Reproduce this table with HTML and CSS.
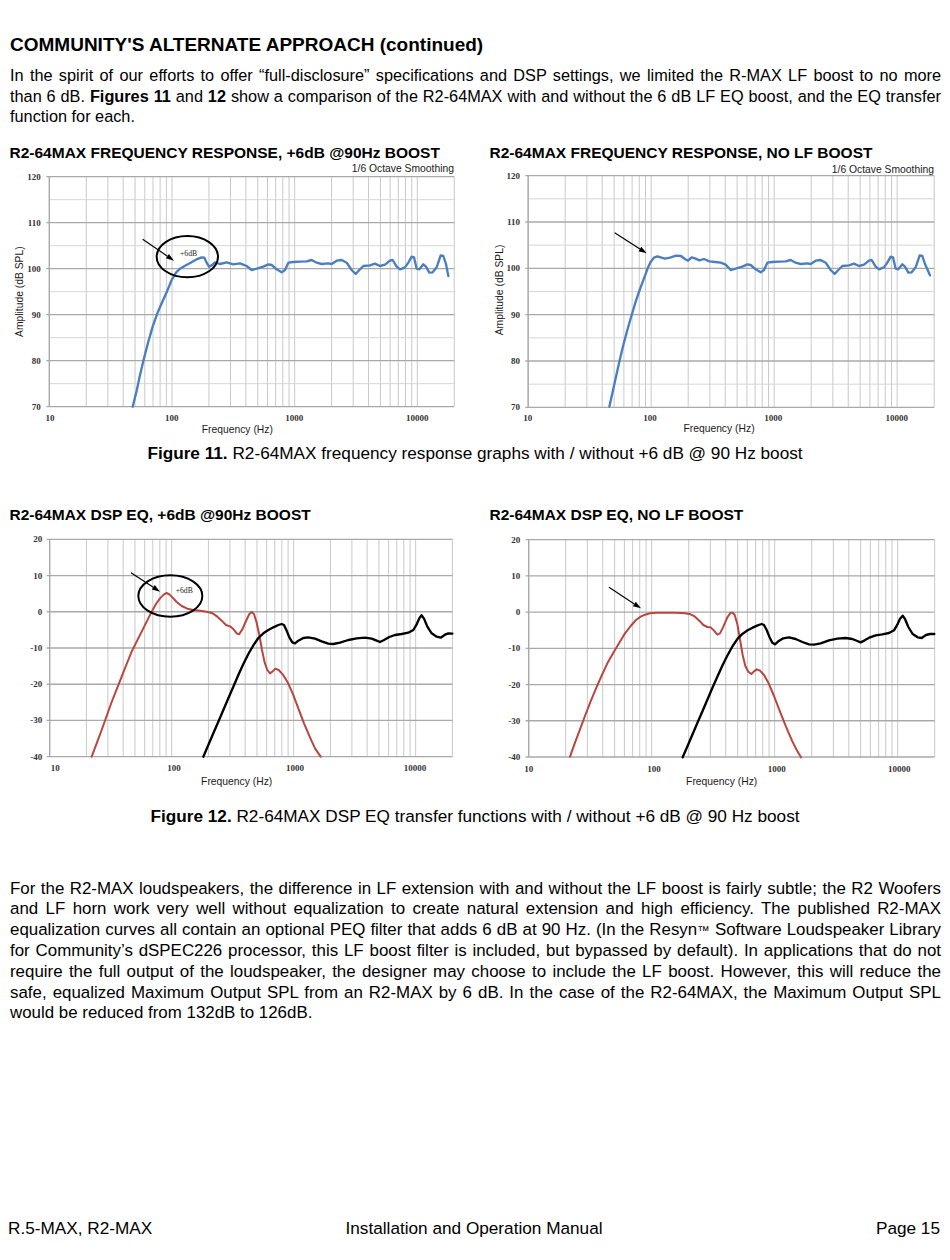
FILE: index.html
```html
<!DOCTYPE html>
<html lang="en">
<head>
<meta charset="utf-8">
<title>Installation and Operation Manual - Page 15</title>
<link rel="stylesheet" href="styles.css">
</head>
<body>
<div class="page">
  <h1 class="heading">COMMUNITY'S ALTERNATE APPROACH (continued)</h1>
  <p class="para intro">
    <span class="ln">In the spirit of our efforts to offer “full-disclosure” specifications and DSP settings, we limited the R-MAX LF boost to no more</span>
    <span class="ln">than 6 dB. <b>Figures 11</b> and <b>12</b> show a comparison of the R2-64MAX with and without the 6 dB LF EQ boost, and the EQ transfer</span>
    <span class="ln ln-last">function for each.</span>
  </p>

  <section class="fig-row fig-row-top">
    <div class="fig">
      <h2 class="fig-title">R2-64MAX FREQUENCY RESPONSE, +6dB @90Hz BOOST</h2>
      <svg class="chart chart-top" viewBox="0 66 1410 834">
        <defs>
          <g id="dec">
            <line x1="0" y1="0" x2="0" y2="1"/>
            <line x1="110.8" y1="0" x2="110.8" y2="1"/>
            <line x1="175.6" y1="0" x2="175.6" y2="1"/>
            <line x1="221.6" y1="0" x2="221.6" y2="1"/>
            <line x1="257.2" y1="0" x2="257.2" y2="1"/>
            <line x1="286.4" y1="0" x2="286.4" y2="1"/>
            <line x1="311" y1="0" x2="311" y2="1"/>
            <line x1="332.3" y1="0" x2="332.3" y2="1"/>
            <line x1="351.2" y1="0" x2="351.2" y2="1"/>
          </g>
        </defs>
        <g class="vgrid">
          <use href="#dec" transform="translate(148 110) scale(1 690)"/>
          <use href="#dec" transform="translate(516 110) scale(1 690)"/>
          <use href="#dec" transform="translate(884 110) scale(1 690)"/>
          <line x1="1252" y1="110" x2="1252" y2="800"/>
          <line x1="1362.8" y1="110" x2="1362.8" y2="800"/>
        </g>
        <g class="hminor">
          <line x1="148" y1="179" x2="1362.8" y2="179"/>
          <line x1="148" y1="317" x2="1362.8" y2="317"/>
          <line x1="148" y1="455" x2="1362.8" y2="455"/>
          <line x1="148" y1="593" x2="1362.8" y2="593"/>
          <line x1="148" y1="731" x2="1362.8" y2="731"/>
        </g>
        <g class="hmajor">
          <line x1="139" y1="110" x2="1362.8" y2="110"/>
          <line x1="139" y1="248" x2="1362.8" y2="248"/>
          <line x1="139" y1="386" x2="1362.8" y2="386"/>
          <line x1="139" y1="524" x2="1362.8" y2="524"/>
          <line x1="139" y1="662" x2="1362.8" y2="662"/>
          <line x1="139" y1="800" x2="1362.8" y2="800"/>
          <line x1="148" y1="110" x2="148" y2="800"/>
        </g>
        <polyline class="curve blue" points="398,800 410,752 420,705 432,655 445,605 458,560 472,520 487,485 502,452 515,420 528,398 540,386 555,377 572,368 590,358 605,352 613,353 620,368 627,380 635,376 645,367 660,372 680,367 700,373 720,370 740,378 755,390 770,386 790,380 805,373 815,375 830,388 845,397 855,390 865,368 880,366 900,365 920,364 935,360 950,368 965,372 985,370 995,372 1010,362 1025,360 1040,368 1055,390 1067,402 1078,390 1090,378 1110,376 1125,371 1140,378 1155,374 1170,362 1178,360 1190,380 1200,388 1215,382 1225,368 1235,350 1242,352 1250,386 1258,388 1270,373 1278,380 1288,398 1298,397 1310,382 1322,346 1330,348 1338,372 1345,408"/>
        <ellipse class="ring" cx="562" cy="350" rx="92" ry="62"/>
        <line class="arrow" x1="428" y1="298" x2="502.2" y2="348.5"/>
        <polygon class="arrowhead" points="522,362 497.7,355.1 506.7,341.9"/>
        <text class="note" x="540" y="348">+6dB</text>
        <text class="ax" x="1362" y="96" text-anchor="end">1/6 Octave Smoothing</text>
        <g class="tick" text-anchor="end">
          <text x="122" y="119">120</text>
          <text x="122" y="257">110</text>
          <text x="122" y="395">100</text>
          <text x="122" y="533">90</text>
          <text x="122" y="671">80</text>
          <text x="122" y="809">70</text>
        </g>
        <g class="tick" text-anchor="middle">
          <text x="150" y="844">10</text>
          <text x="515" y="844">100</text>
          <text x="883" y="844">1000</text>
          <text x="1252" y="844">10000</text>
        </g>
        <text class="ax" x="712" y="879" text-anchor="middle">Frequency (Hz)</text>
        <text class="ax" transform="translate(69 455) rotate(-90)" text-anchor="middle">Amplitude (dB SPL)</text>
      </svg>
    </div>
    <div class="fig">
      <h2 class="fig-title">R2-64MAX FREQUENCY RESPONSE, NO LF BOOST</h2>
      <svg class="chart chart-top" viewBox="0 66 1410 834">
        <g class="vgrid">
          <use href="#dec" transform="translate(144.5 107) scale(1.0027 695)"/>
          <use href="#dec" transform="translate(513.5 107) scale(1.0027 695)"/>
          <use href="#dec" transform="translate(882.5 107) scale(1.0027 695)"/>
          <line x1="1251.5" y1="107" x2="1251.5" y2="802"/>
          <line x1="1362.6" y1="107" x2="1362.6" y2="802"/>
        </g>
        <g class="hminor">
          <line x1="144.5" y1="176.5" x2="1362.6" y2="176.5"/>
          <line x1="144.5" y1="315.5" x2="1362.6" y2="315.5"/>
          <line x1="144.5" y1="454.5" x2="1362.6" y2="454.5"/>
          <line x1="144.5" y1="593.5" x2="1362.6" y2="593.5"/>
          <line x1="144.5" y1="732.5" x2="1362.6" y2="732.5"/>
        </g>
        <g class="hmajor">
          <line x1="136" y1="107" x2="1362.6" y2="107"/>
          <line x1="136" y1="246" x2="1362.6" y2="246"/>
          <line x1="136" y1="385" x2="1362.6" y2="385"/>
          <line x1="136" y1="524" x2="1362.6" y2="524"/>
          <line x1="136" y1="663" x2="1362.6" y2="663"/>
          <line x1="136" y1="802" x2="1362.6" y2="802"/>
          <line x1="144.5" y1="107" x2="144.5" y2="802"/>
        </g>
        <polyline class="curve blue" points="388,800 398,755 408,710 418,665 430,615 442,570 455,525 468,482 480,447 492,415 503,385 512,365 522,353 532,349 542,352 555,356 570,353 588,347 603,348 615,357 624,362 635,352 645,355 658,361 672,357 688,364 705,366 722,368 737,374 752,390 767,386 787,380 802,373 812,375 827,388 842,397 852,390 862,368 877,366 897,365 917,364 932,360 947,368 962,372 982,370 992,372 1007,362 1022,360 1037,368 1052,390 1064,402 1075,390 1087,378 1107,376 1122,371 1137,378 1152,374 1167,362 1175,360 1187,380 1197,388 1212,382 1222,368 1232,350 1239,352 1247,386 1255,388 1267,373 1275,380 1285,398 1295,397 1307,382 1319,346 1327,348 1335,372 1350,406"/>
        <line class="arrow" x1="404" y1="278" x2="479.8" y2="327"/>
        <polygon class="arrowhead" points="500,340 475.5,333.7 484.1,320.3"/>
        <text class="ax" x="1362" y="98" text-anchor="end">1/6 Octave Smoothing</text>
        <g class="tick" text-anchor="end">
          <text x="120" y="116">120</text>
          <text x="120" y="255">110</text>
          <text x="120" y="394">100</text>
          <text x="120" y="533">90</text>
          <text x="120" y="672">80</text>
          <text x="120" y="811">70</text>
        </g>
        <g class="tick" text-anchor="middle">
          <text x="143" y="844">10</text>
          <text x="510" y="844">100</text>
          <text x="880" y="844">1000</text>
          <text x="1250" y="844">10000</text>
        </g>
        <text class="ax" x="717" y="877" text-anchor="middle">Frequency (Hz)</text>
        <text class="ax" transform="translate(69 450) rotate(-90)" text-anchor="middle">Amplitude (dB SPL)</text>
      </svg>
    </div>
  </section>
  <p class="caption"><b>Figure 11.</b> R2-64MAX frequency response graphs with / without +6 dB @ 90 Hz boost</p>

  <section class="fig-row fig-row-bottom">
    <div class="fig">
      <h2 class="fig-title">R2-64MAX DSP EQ, +6dB @90Hz BOOST</h2>
      <svg class="chart chart-bottom" viewBox="0 72 1410 810">
        <g class="vgrid">
          <use href="#dec" transform="translate(149 118) scale(0.9946 652)"/>
          <use href="#dec" transform="translate(515 118) scale(0.9946 652)"/>
          <use href="#dec" transform="translate(881 118) scale(0.9946 652)"/>
          <line x1="1247" y1="118" x2="1247" y2="770"/>
          <line x1="1357.2" y1="118" x2="1357.2" y2="770"/>
        </g>
        <g class="hmajor">
          <line x1="140" y1="118" x2="1357.2" y2="118"/>
          <line x1="140" y1="226.7" x2="1357.2" y2="226.7"/>
          <line x1="140" y1="335.3" x2="1357.2" y2="335.3"/>
          <line x1="140" y1="444" x2="1357.2" y2="444"/>
          <line x1="140" y1="552.7" x2="1357.2" y2="552.7"/>
          <line x1="140" y1="661.3" x2="1357.2" y2="661.3"/>
          <line x1="140" y1="770" x2="1357.2" y2="770"/>
          <line x1="149" y1="118" x2="149" y2="770"/>
        </g>
        <polyline class="curve red" points="275,770 290,730 305,690 320,648 335,606 350,568 365,530 380,492 395,455 410,425 425,395 440,365 455,335 468,312 480,295 492,283 500,279 508,283 518,293 530,306 545,318 562,326 580,330 600,332 620,335 638,340 652,350 665,362 678,375 690,379 700,387 710,400 717,403 727,388 738,363 748,342 755,336 762,342 770,368 778,405 786,450 794,488 802,510 810,520 818,514 826,506 836,510 848,523 862,545 878,580 895,625 912,670 930,712 945,745 962,770"/>
        <polyline class="curve black" points="610,770 625,735 640,700 655,665 670,630 685,595 700,560 715,525 730,492 745,462 760,436 775,414 790,400 805,390 820,382 835,375 845,372 852,375 860,392 868,412 877,427 885,430 895,422 910,414 925,412 945,416 965,424 985,431 1000,432 1020,428 1045,420 1070,415 1095,413 1115,416 1130,422 1140,426 1152,420 1168,411 1185,405 1205,402 1225,398 1240,390 1250,373 1258,355 1265,346 1272,356 1282,380 1295,400 1310,410 1322,413 1335,404 1345,400 1357,401"/>
        <ellipse class="ring" cx="511" cy="288" rx="96" ry="62"/>
        <line class="arrow" x1="393" y1="218" x2="459.9" y2="261.8"/>
        <polygon class="arrowhead" points="480,275 455.5,268.5 464.3,255.1"/>
        <text class="note" x="527" y="280">+6dB</text>
        <g class="tick" text-anchor="end">
          <text x="127" y="127">20</text>
          <text x="127" y="235.7">10</text>
          <text x="127" y="344.3">0</text>
          <text x="127" y="453">-10</text>
          <text x="127" y="561.7">-20</text>
          <text x="127" y="670.3">-30</text>
          <text x="127" y="779">-40</text>
        </g>
        <g class="tick" text-anchor="middle">
          <text x="166" y="814">10</text>
          <text x="522" y="814">100</text>
          <text x="885" y="814">1000</text>
          <text x="1245" y="814">10000</text>
        </g>
        <text class="ax" x="710" y="856" text-anchor="middle">Frequency (Hz)</text>
      </svg>
    </div>
    <div class="fig">
      <h2 class="fig-title">R2-64MAX DSP EQ, NO LF BOOST</h2>
      <svg class="chart chart-bottom" viewBox="0 72 1410 810">
        <g class="vgrid">
          <use href="#dec" transform="translate(146 119) scale(1.0027 652)"/>
          <use href="#dec" transform="translate(515 119) scale(1.0027 652)"/>
          <use href="#dec" transform="translate(884 119) scale(1.0027 652)"/>
          <line x1="1253" y1="119" x2="1253" y2="771"/>
          <line x1="1364.1" y1="119" x2="1364.1" y2="771"/>
        </g>
        <g class="hmajor">
          <line x1="137" y1="119" x2="1364.1" y2="119"/>
          <line x1="137" y1="227.7" x2="1364.1" y2="227.7"/>
          <line x1="137" y1="336.3" x2="1364.1" y2="336.3"/>
          <line x1="137" y1="445" x2="1364.1" y2="445"/>
          <line x1="137" y1="553.7" x2="1364.1" y2="553.7"/>
          <line x1="137" y1="662.3" x2="1364.1" y2="662.3"/>
          <line x1="137" y1="771" x2="1364.1" y2="771"/>
          <line x1="146" y1="119" x2="146" y2="771"/>
        </g>
        <polyline class="curve red" points="270,770 285,728 300,688 316,645 332,604 348,565 365,527 382,490 400,458 418,428 435,400 452,378 468,360 482,350 495,344 510,340 530,338 560,338 590,338 615,340 632,343 645,350 658,362 670,375 682,381 692,382 702,392 712,404 720,400 730,380 742,352 752,338 758,338 764,345 772,372 780,418 788,465 796,498 805,515 814,522 822,514 830,508 840,512 852,525 866,550 882,588 900,635 918,680 936,722 950,750 963,772"/>
        <polyline class="curve black" points="608,772 623,737 638,702 653,667 668,632 683,597 698,562 713,528 728,495 743,465 758,438 773,416 788,401 803,391 818,383 833,376 845,372 852,375 860,390 868,410 877,428 885,433 895,424 910,415 927,412 947,417 967,426 987,433 1002,434 1022,430 1047,421 1072,416 1097,414 1117,417 1132,423 1142,427 1154,421 1170,412 1187,406 1207,403 1227,399 1242,391 1252,374 1260,356 1268,347 1275,357 1285,381 1298,402 1313,412 1325,414 1338,405 1350,402 1363,402"/>
        <line class="arrow" x1="387" y1="262" x2="462.9" y2="311.8"/>
        <polygon class="arrowhead" points="483,325 458.5,318.5 467.3,305.1"/>
        <g class="tick" text-anchor="end">
          <text x="121" y="128">20</text>
          <text x="121" y="236.7">10</text>
          <text x="121" y="345.3">0</text>
          <text x="121" y="454">-10</text>
          <text x="121" y="562.7">-20</text>
          <text x="121" y="671.3">-30</text>
          <text x="121" y="780">-40</text>
        </g>
        <g class="tick" text-anchor="middle">
          <text x="146" y="815">10</text>
          <text x="522" y="815">100</text>
          <text x="890" y="815">1000</text>
          <text x="1258" y="815">10000</text>
        </g>
        <text class="ax" x="725" y="854" text-anchor="middle">Frequency (Hz)</text>
      </svg>
    </div>
  </section>
  <p class="caption"><b>Figure 12.</b> R2-64MAX DSP EQ transfer functions with / without +6 dB @ 90 Hz boost</p>

  <p class="para body-text">
    <span class="ln">For the R2-MAX loudspeakers, the difference in LF extension with and without the LF boost is fairly subtle; the R2 Woofers</span>
    <span class="ln">and LF horn work very well without equalization to create natural extension and high efficiency. The published R2-MAX</span>
    <span class="ln">equalization curves all contain an optional PEQ filter that adds 6 dB at 90 Hz. (In the Resyn<span class="tm">™</span> Software Loudspeaker Library</span>
    <span class="ln">for Community’s dSPEC226 processor, this LF boost filter is included, but bypassed by default). In applications that do not</span>
    <span class="ln">require the full output of the loudspeaker, the designer may choose to include the LF boost. However, this will reduce the</span>
    <span class="ln">safe, equalized Maximum Output SPL from an R2-MAX by 6 dB. In the case of the R2-64MAX, the Maximum Output SPL</span>
    <span class="ln ln-last">would be reduced from 132dB to 126dB.</span>
  </p>

  <footer class="footer">
    <span class="foot-left">R.5-MAX, R2-MAX</span>
    <span class="foot-center">Installation and Operation Manual</span>
    <span class="foot-right">Page 15</span>
  </footer>
</div>
</body>
</html>
```

FILE: styles.css
```css
html, body {
  margin: 0;
  padding: 0;
  background: #ffffff;
}

body {
  font-family: "Liberation Sans", Arial, sans-serif;
  color: #000000;
}

.page {
  width: 950px;
  height: 1260px;
  box-sizing: border-box;
  padding-top: 34px;
  display: flex;
  flex-direction: column;
  overflow: hidden;
}

.heading {
  margin: 0;
  padding: 0 10px;
  font-size: 19px;
  line-height: 22px;
  font-weight: bold;
}

.para {
  margin: 0;
  padding: 0 9px 0 10px;
  font-size: 16.9px;
  line-height: 20.6px;
}

.intro {
  margin-top: 9px;
  font-size: 16.3px;
}

.ln {
  display: block;
  text-align: justify;
  text-align-last: justify;
}

.ln-last {
  text-align-last: left;
}

.tm {
  font-size: 0.75em;
}

.fig-row {
  display: flex;
  gap: 10px;
}

.fig-row-top {
  margin-top: 17px;
}

.fig-row-bottom {
  margin-top: 42.4px;
}

.fig {
  width: 470px;
  flex: none;
}

.fig-title {
  margin: 0;
  padding-left: 9.5px;
  font-size: 15.5px;
  line-height: 18px;
  font-weight: bold;
  white-space: nowrap;
}

.chart {
  display: block;
  width: 470px;
}

.chart-top {
  height: 278px;
}

.chart-bottom {
  height: 270px;
}

.caption {
  margin: 3px 0 0;
  font-size: 17.2px;
  line-height: 20.6px;
  text-align: center;
}

.fig-row-bottom + .caption {
  margin-top: 12px;
}

.body-text {
  margin-top: 52.3px;
}

.footer {
  margin-top: auto;
  padding: 0 10px 21.5px 8px;
  display: grid;
  grid-template-columns: 1fr auto 1fr;
  font-size: 17.2px;
  line-height: 20.6px;
}

.foot-right {
  justify-self: end;
}

/* chart drawing */
.vgrid {
  stroke: #c9c9c9;
  stroke-width: 3;
}

.hminor {
  stroke: #d6d6d6;
  stroke-width: 3;
}

.hmajor {
  stroke: #a9a9a9;
  stroke-width: 4;
}

.curve {
  fill: none;
  stroke-linejoin: round;
  stroke-linecap: round;
}

.blue {
  stroke: #4a7ebf;
  stroke-width: 7;
}

.red {
  stroke: #b9453f;
  stroke-width: 6;
}

.black {
  stroke: #000000;
  stroke-width: 7;
}

.ring {
  fill: none;
  stroke: #000000;
  stroke-width: 6;
}

.arrow {
  stroke: #000000;
  stroke-width: 3.5;
}

.arrowhead {
  fill: #000000;
}

.note {
  font-family: "Liberation Serif", "Times New Roman", serif;
  font-size: 23px;
  fill: #222222;
}

.ax {
  font-family: "Liberation Sans", Arial, sans-serif;
  font-size: 31px;
  fill: #1a1a1a;
}

.tick {
  font-family: "Liberation Serif", "Times New Roman", serif;
  font-weight: bold;
  font-size: 27px;
  fill: #333333;
}
```
